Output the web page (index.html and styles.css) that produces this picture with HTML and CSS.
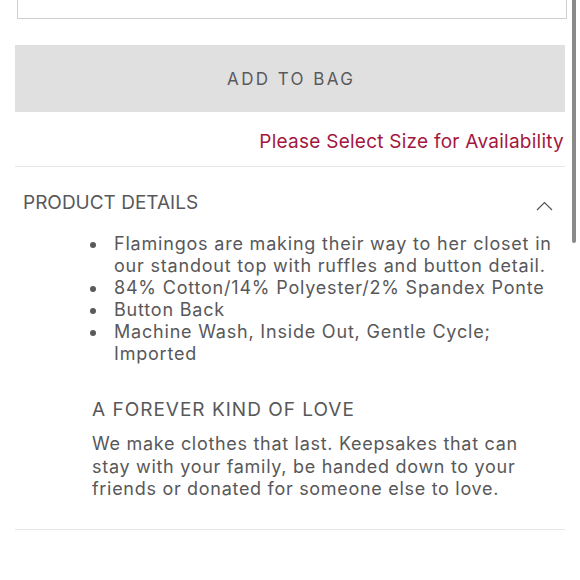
FILE: index.html
```html
<!DOCTYPE html>
<html>
<head>
<meta charset="utf-8">
<link rel="stylesheet" href="styles.css">
</head>
<body>
<div class="page">
  <div class="size-box"></div>
  <button class="add-btn">ADD TO BAG</button>
  <div class="notice">Please Select Size for Availability</div>
  <div class="divider"></div>
  <div class="acc-head">
    <span class="acc-title">PRODUCT DETAILS</span>
    <svg class="chev" width="17" height="10" viewBox="0 0 17 10"><path d="M1 9 L8.5 1.5 L16 9" fill="none" stroke="#555" stroke-width="1.2"/></svg>
  </div>
  <ul class="details">
    <li>Flamingos are making their way to her closet in our standout top with ruffles and button detail.</li>
    <li>84% Cotton/14% Polyester/2% Spandex Ponte</li>
    <li>Button Back</li>
    <li>Machine Wash, Inside Out, Gentle Cycle; Imported</li>
  </ul>
  <h3 class="sub-title">A FOREVER KIND OF LOVE</h3>
  <p class="sub-text">We make clothes that last. Keepsakes that can stay with your family, be handed down to your friends or donated for someone else to love.</p>
  <div class="divider bottom"></div>
</div>
<div class="scroll-thumb"></div>
</body>
</html>
```
FILE: styles.css
```css
html, body {
  margin: 0;
  padding: 0;
  background: #fff;
}
body {
  font-family: Inter, "Open Sans", sans-serif;
  color: #58585a;
  width: 580px;
  height: 580px;
  overflow: hidden;
  position: relative;
}
.page {
  padding: 0 15px;
}
.size-box {
  height: 18px;
  margin: 0 -2px 0 2px;
  border: 1px solid #cfcfcf;
  border-top: none;
}
.add-btn {
  display: block;
  width: 100%;
  height: 67px;
  margin-top: 26px;
  border: none;
  background: #e0e0e0;
  color: #5a5a5c;
  font-family: Inter, sans-serif;
  font-size: 17px;
  letter-spacing: 2.4px;
  padding: 0 0 0 2.4px;
}
.notice {
  text-align: right;
  color: #a3173f;
  font-size: 19px;
  letter-spacing: 0.25px;
  line-height: 26px;
  margin-top: 17px;
  padding-right: 1px;
}
.divider {
  height: 1px;
  background: #e6e6e6;
  margin-top: 11px;
}
.acc-head {
  display: flex;
  justify-content: space-between;
  align-items: center;
  padding: 23px 12px 0 8px;
  height: 26px;
}
.acc-title {
  font-size: 19px;
  letter-spacing: 0;
  line-height: 26px;
}
.chev {
  margin-top: 5px;
}
.details {
  list-style: none;
  margin: 17px 0 0 0;
  padding: 0 0 0 99px;
  font-size: 18px;
  letter-spacing: 0.8px;
  line-height: 22px;
  width: 446px;
}
.details li::before {
  content: "";
  display: inline-block;
  width: 6px;
  height: 6px;
  border-radius: 50%;
  background: #5a5a5c;
  margin-left: -24px;
  margin-right: 18px;
  vertical-align: 2px;
}
.sub-title {
  margin: 33px 0 0 77px;
  font-size: 19px;
  letter-spacing: 1px;
  font-weight: normal;
  line-height: 24px;
}
.sub-text {
  margin: 11px 0 0 77px;
  font-size: 18px;
  letter-spacing: 0.7px;
  line-height: 22.5px;
  width: 448px;
}
.divider.bottom {
  margin-top: 28px;
}
.scroll-thumb {
  position: absolute;
  top: 0;
  right: 4px;
  width: 4px;
  height: 243px;
  background: #8a8a8a;
  border-radius: 0 0 2px 2px;
}
```
